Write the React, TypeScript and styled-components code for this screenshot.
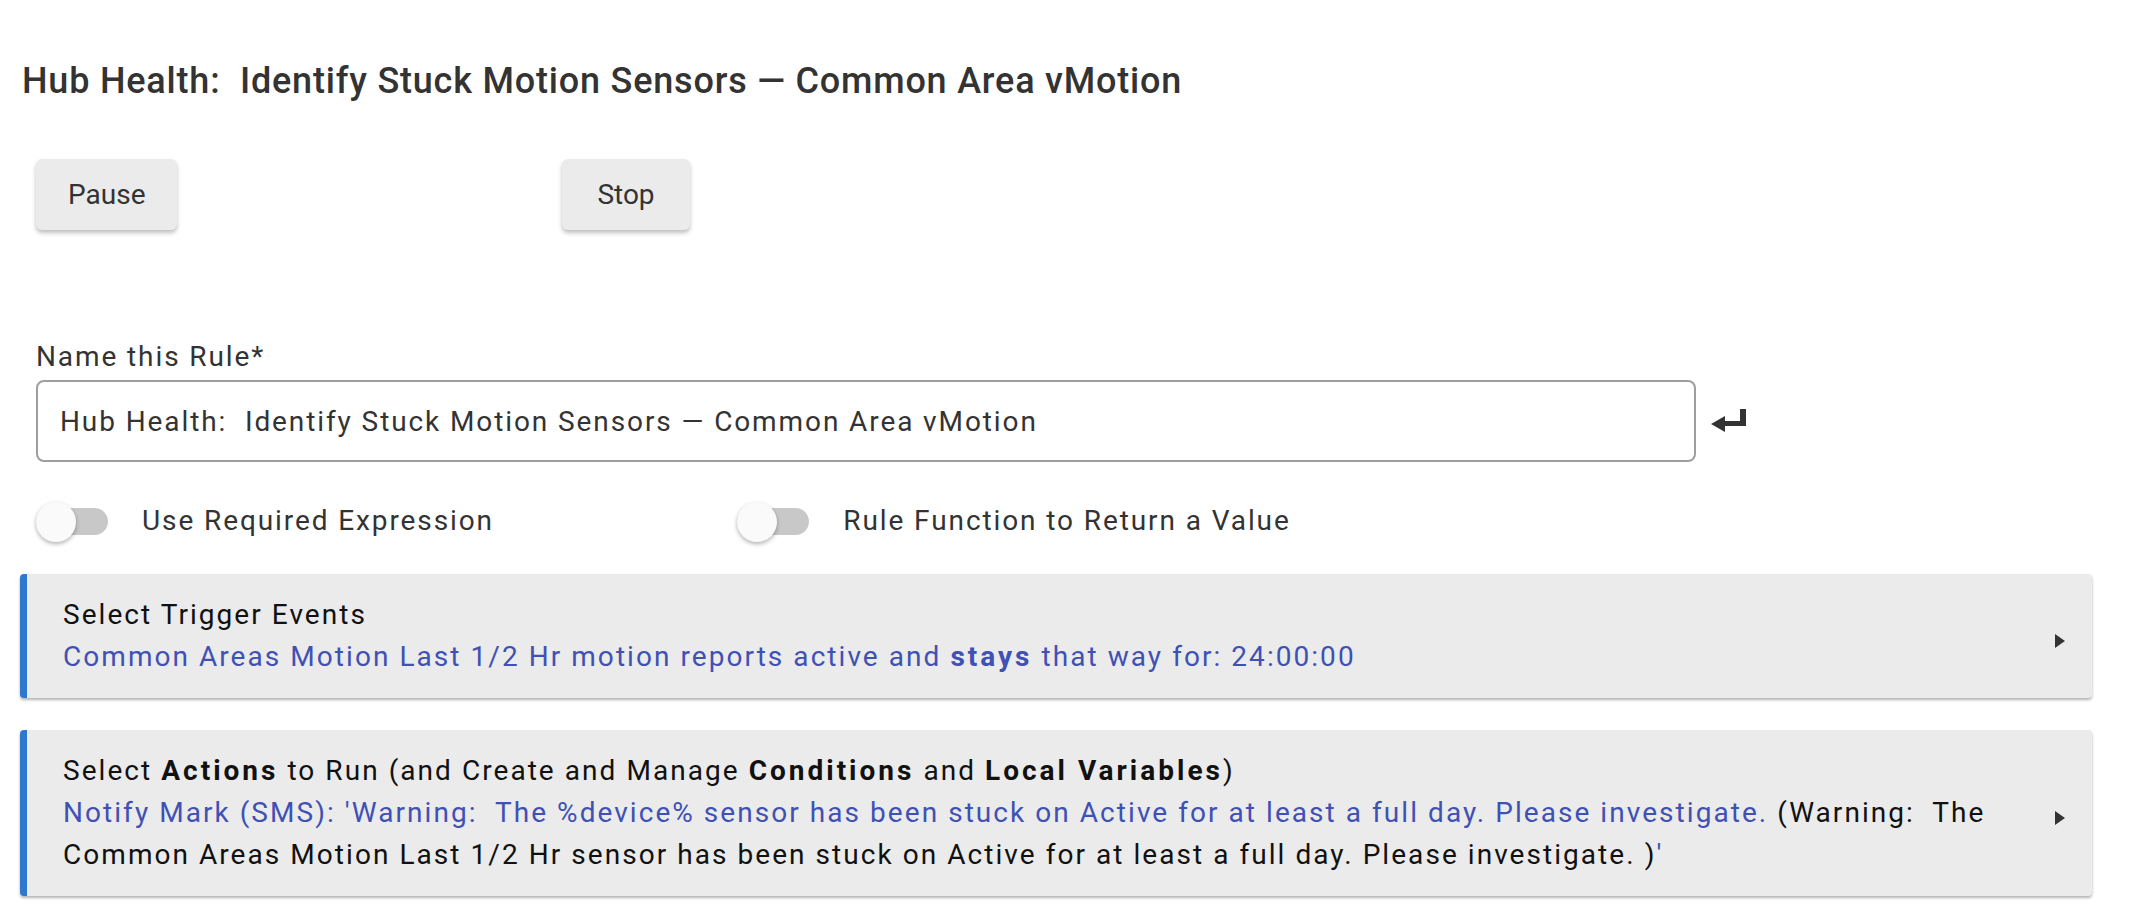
import React, { FC } from 'react';
import styled, { createGlobalStyle } from 'styled-components';

const colors = {
  text: '#333333',
  dark: '#111111',
  link: '#3f51b5',
  accent: '#2f78d0',
  panel: '#ebebeb',
  track: '#c8c8c8',
  border: '#9e9e9e',
};

// the reference text runs a little wider than plain Roboto
const spacing = {
  title: '0.8px',
  body: '1.9px',
  card: '2.05px',
  strong: '3px',
};

const GlobalStyle = createGlobalStyle`
  body {
    margin: 0;
    background: #ffffff;
    font-family: Roboto, "Noto Sans", "Liberation Sans", sans-serif;
    color: ${colors.text};
  }
`;

const Page = styled.div`
  display: flex;
  flex-direction: column;
  padding: 59px 20px 40px;
`;

const Title = styled.h1`
  margin: 0;
  padding-left: 2px;
  font-size: 36px;
  line-height: 44px;
  font-weight: 500;
  letter-spacing: ${spacing.title};
  color: ${colors.text};
  white-space: pre-wrap;
`;

const ButtonRow = styled.div`
  display: grid;
  grid-template-columns: repeat(4, 1fr);
  margin-top: 56px;
`;

const Cell = styled.div`
  padding: 0 16px;
`;

const Button = styled.button`
  height: 71px;
  min-width: 128px;
  padding: 0 32px;
  border: none;
  border-radius: 6px;
  background: ${colors.panel};
  color: ${colors.text};
  font-family: inherit;
  font-size: 28px;
  box-shadow: 0 3px 4px rgba(0, 0, 0, 0.25);
  cursor: pointer;
`;

const Field = styled.div`
  display: flex;
  flex-direction: column;
  gap: 5px;
  margin-top: 109px;
  padding-left: 16px;
`;

const Label = styled.label`
  font-size: 28px;
  line-height: 36px;
  letter-spacing: ${spacing.body};
  color: ${colors.text};
`;

const InputRow = styled.div`
  display: flex;
  align-items: center;
  gap: 15px;
`;

const TextInput = styled.input`
  box-sizing: border-box;
  width: 1660px;
  height: 82px;
  padding: 0 22px;
  border: 2px solid ${colors.border};
  border-radius: 8px;
  font-family: inherit;
  font-size: 28px;
  letter-spacing: ${spacing.body};
  color: ${colors.text};
  outline: none;
`;

const ToggleRow = styled.div`
  display: grid;
  grid-template-columns: repeat(3, 1fr);
  margin-top: 39px;
`;

const ToggleItem = styled.label`
  display: flex;
  align-items: center;
  gap: 34px;
  padding: 0 16px;
  font-size: 28px;
  line-height: 40px;
  letter-spacing: ${spacing.body};
  color: ${colors.text};
`;

const Track = styled.span`
  position: relative;
  display: block;
  flex: none;
  width: 72px;
  height: 27px;
  border-radius: 14px;
  background: ${colors.track};
`;

const Knob = styled.span`
  position: absolute;
  left: 0;
  top: -6px;
  width: 40px;
  height: 40px;
  border-radius: 50%;
  background: #fafafa;
  box-shadow: 0 2px 4px rgba(0, 0, 0, 0.3);
`;

const Cards = styled.div`
  display: flex;
  flex-direction: column;
  gap: 32px;
  margin-top: 33px;
  margin-right: 32px;
`;

const Card = styled.div`
  display: flex;
  align-items: center;
  padding: 20px 27px 20px 36px;
  border-left: 7px solid ${colors.accent};
  border-radius: 4px;
  background: ${colors.panel};
  box-shadow: 0 2px 3px rgba(0, 0, 0, 0.3);
  cursor: pointer;
`;

const CardBody = styled.div`
  flex: 1;
  font-size: 28px;
  line-height: 42px;
  letter-spacing: ${spacing.card};
  color: ${colors.dark};
  white-space: pre-wrap;
`;

const Line = styled.div<{ $link?: boolean }>`
  color: ${(p) => (p.$link ? colors.link : colors.dark)};
`;

const Link = styled.span`
  color: ${colors.link};
`;

const Strong = styled.b`
  font-weight: 700;
  letter-spacing: ${spacing.strong};
`;

const Chevron = styled.svg`
  flex: none;
  margin: 10px 0 0 40px;
  fill: ${colors.text};
`;

const ReturnIcon: FC = () => (
  <svg width="35" height="24" viewBox="0 0 35 24" fill="#333">
    <rect x="29" y="0" width="6" height="17" />
    <rect x="12" y="12" width="23" height="5" />
    <polygon points="0,15 14,7 14,23" />
  </svg>
);

const Arrow: FC = () => (
  <Chevron width="10" height="14" viewBox="0 0 10 14">
    <polygon points="0,0 10,7 0,14" />
  </Chevron>
);

const Toggle: FC<{ label: string }> = ({ label }) => (
  <ToggleItem>
    <Track>
      <Knob />
    </Track>
    {label}
  </ToggleItem>
);

const ruleName = 'Hub Health:  Identify Stuck Motion Sensors — Common Area vMotion';

const App: FC = () => (
  <>
    <GlobalStyle />
    <Page>
      <Title>{ruleName}</Title>

      <ButtonRow>
        <Cell>
          <Button>Pause</Button>
        </Cell>
        <Cell>
          <Button>Stop</Button>
        </Cell>
      </ButtonRow>

      <Field>
        <Label>Name this Rule*</Label>
        <InputRow>
          <TextInput defaultValue={ruleName} />
          <ReturnIcon />
        </InputRow>
      </Field>

      <ToggleRow>
        <Toggle label="Use Required Expression" />
        <Toggle label="Rule Function to Return a Value" />
      </ToggleRow>

      <Cards>
        <Card>
          <CardBody>
            <Line>Select Trigger Events</Line>
            <Line $link>
              Common Areas Motion Last 1/2 Hr motion reports active and <Strong>stays</Strong> that way for: 24:00:00
            </Line>
          </CardBody>
          <Arrow />
        </Card>

        <Card>
          <CardBody>
            <Line>
              Select <Strong>Actions</Strong> to Run (and Create and Manage <Strong>Conditions</Strong> and{' '}
              <Strong>Local Variables</Strong>)
            </Line>
            <Line>
              <Link>
                {"Notify Mark (SMS): 'Warning:  The %device% sensor has been stuck on Active for at least a full day. Please investigate."}
              </Link>
              {" (Warning:  The Common Areas Motion Last 1/2 Hr sensor has been stuck on Active for at least a full day. Please investigate. )"}
              <Link>'</Link>
            </Line>
          </CardBody>
          <Arrow />
        </Card>
      </Cards>
    </Page>
  </>
);

export default App;
